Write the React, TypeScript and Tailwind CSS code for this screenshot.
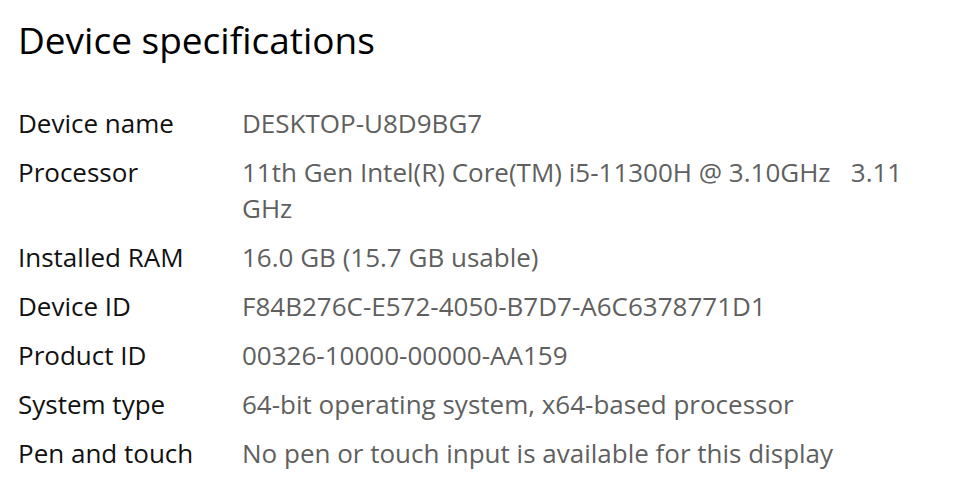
const SPECS = [
  { label: 'Device name', value: 'DESKTOP-U8D9BG7' },
  { label: 'Processor', value: '11th Gen Intel(R) Core(TM) i5-11300H @ 3.10GHz   3.11 GHz' },
  { label: 'Installed RAM', value: '16.0 GB (15.7 GB usable)' },
  { label: 'Device ID', value: 'F84B276C-E572-4050-B7D7-A6C6378771D1' },
  { label: 'Product ID', value: '00326-10000-00000-AA159' },
  { label: 'System type', value: '64-bit operating system, x64-based processor' },
  { label: 'Pen and touch', value: 'No pen or touch input is available for this display' },
];

export default function App() {
  return (
    <main className="min-h-screen bg-white pl-[18px] pt-[14px] font-['Open_Sans',sans-serif]">
      {/* Header */}
      <h1 className="text-[37px] leading-[52px] text-black">Device specifications</h1>

      {/* Spec rows */}
      <dl className="mt-[39px] flex flex-col gap-[13px]">
        {SPECS.map((s) => (
          <div key={s.label} className="flex text-[26px] leading-[36px]">
            <dt className="w-[224px] shrink-0 text-[#111]">{s.label}</dt>
            <dd className="w-[680px] whitespace-pre-wrap text-[#5f5f5f]">{s.value}</dd>
          </div>
        ))}
      </dl>
    </main>
  );
}
